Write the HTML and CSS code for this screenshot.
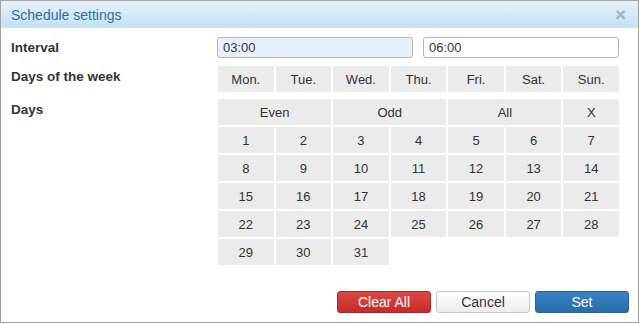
FILE: index.html
```html
<!DOCTYPE html>
<html lang="en">

<head>
  <meta charset="UTF-8" />
  <title>Schedule settings</title>
  <link rel="stylesheet" href="styles.css">
</head>

<body>
  <div class="dialog">
    <div class="dialog-header">
      <span class="dialog-title">Schedule settings</span>
      <span class="dialog-close">&#215;</span>
    </div>

    <div class="dialog-body">
      <div class="form-row">
        <label class="form-label">Interval</label>
        <div class="interval">
          <input class="time-input filled" type="text" value="03:00">
          <input class="time-input" type="text" value="06:00">
        </div>
      </div>

      <div class="form-row week-row">
        <label class="form-label">Days of the week</label>
        <div class="cells">
          <span class="cell">Mon.</span>
          <span class="cell">Tue.</span>
          <span class="cell">Wed.</span>
          <span class="cell">Thu.</span>
          <span class="cell">Fri.</span>
          <span class="cell">Sat.</span>
          <span class="cell">Sun.</span>
        </div>
      </div>

      <div class="form-row days-row">
        <label class="form-label">Days</label>
        <div class="cells">
          <span class="cell span2">Even</span>
          <span class="cell span2">Odd</span>
          <span class="cell span2">All</span>
          <span class="cell">X</span>
          <span class="cell">1</span><span class="cell">2</span><span class="cell">3</span><span class="cell">4</span>
          <span class="cell">5</span><span class="cell">6</span><span class="cell">7</span>
          <span class="cell">8</span><span class="cell">9</span><span class="cell">10</span><span class="cell">11</span>
          <span class="cell">12</span><span class="cell">13</span><span class="cell">14</span>
          <span class="cell">15</span><span class="cell">16</span><span class="cell">17</span><span class="cell">18</span>
          <span class="cell">19</span><span class="cell">20</span><span class="cell">21</span>
          <span class="cell">22</span><span class="cell">23</span><span class="cell">24</span><span class="cell">25</span>
          <span class="cell">26</span><span class="cell">27</span><span class="cell">28</span>
          <span class="cell">29</span><span class="cell">30</span><span class="cell">31</span>
        </div>
      </div>
    </div>

    <div class="dialog-footer">
      <button class="btn btn-red">Clear All</button>
      <button class="btn btn-plain">Cancel</button>
      <button class="btn btn-blue">Set</button>
    </div>
  </div>
</body>

</html>
```

FILE: styles.css
```css
body,
html {
  margin: 0;
  background-color: white;
  font-family: "Liberation Sans", Arial, sans-serif;
  color: #333;
}

.dialog {
  width: 639px;
  height: 323px;
  box-sizing: border-box;
  border: 1px solid #a3a3a3;
  display: flex;
  flex-direction: column;
  background-color: white;
}

.dialog-header {
  height: 27px;
  box-sizing: border-box;
  padding: 0 12px 0 10px;
  display: flex;
  align-items: center;
  justify-content: space-between;
  background: linear-gradient(#e6f2fa, #c3e0f1);
}

.dialog-title {
  font-size: 14px;
  color: #2f6f9f;
}

.dialog-close {
  font-size: 19px;
  font-weight: bold;
  color: #a8b2b8;
  line-height: 1;
}

.dialog-body {
  padding: 9px 10px 0 10px;
  flex: 1;
}

.form-row {
  display: grid;
  grid-template-columns: 206px 402px;
}

.form-label {
  font-size: 13.5px;
  font-weight: bold;
  padding-top: 3px;
}

.interval {
  display: flex;
  gap: 10px;
}

.time-input {
  width: 196px;
  height: 21px;
  box-sizing: border-box;
  border: 1px solid #b5b5b5;
  border-radius: 3px;
  padding: 0 5px;
  font-family: inherit;
  font-size: 13px;
  color: #333;
  background-color: white;
}

.time-input.filled {
  background-color: #e8f0fe;
}

.week-row {
  margin-top: 8px;
}

.days-row {
  margin-top: 7px;
}

.cells {
  display: grid;
  grid-template-columns: repeat(7, 1fr);
  grid-auto-rows: 26px;
  gap: 2px;
  margin-left: 1px;
}

.cell {
  background-color: #ebebeb;
  display: flex;
  align-items: center;
  justify-content: center;
  font-size: 13px;
  color: #333;
}

.span2 {
  grid-column: span 2;
}

.dialog-footer {
  display: flex;
  justify-content: flex-end;
  gap: 5px;
  padding: 0 9px 9px 0;
}

.btn {
  width: 94px;
  height: 22px;
  border-radius: 3px;
  font-family: inherit;
  font-size: 14px;
  padding: 0;
  cursor: pointer;
}

.btn-red {
  background: linear-gradient(#dc4a46, #c52b27);
  border: 1px solid #b02825;
  color: white;
}

.btn-plain {
  background: linear-gradient(#ffffff, #ececec);
  border: 1px solid #c8c8c8;
  color: #333;
}

.btn-blue {
  background: linear-gradient(#3883c6, #2a6ba9);
  border: 1px solid #27609a;
  color: white;
}
```
